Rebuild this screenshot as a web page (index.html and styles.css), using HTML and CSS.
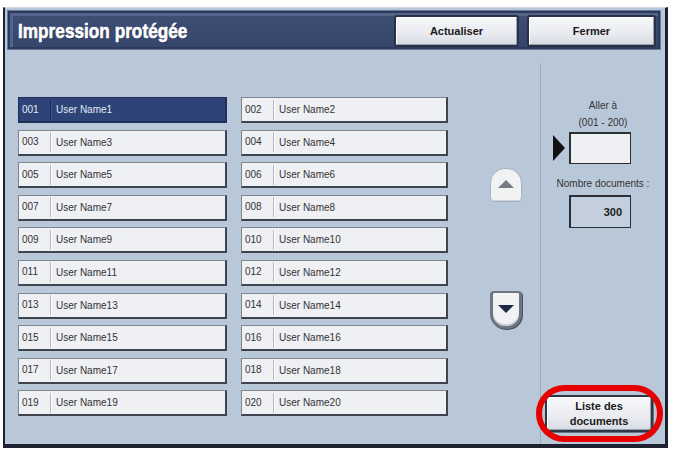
FILE: index.html
```html
<!DOCTYPE html>
<html lang="fr">
<head>
<meta charset="utf-8">
<title>Impression protégée</title>
<link rel="stylesheet" href="styles.css">
</head>
<body>
<div class="screen">
  <div class="header">
    <div class="title">Impression protégée</div>
    <div class="hbtns">
      <div class="hbtn w1">Actualiser</div>
      <div class="hbtn w2">Fermer</div>
    </div>
  </div>
  <div class="main">
    <div class="left">
      <div class="grid">
        <div class="row sel"><span class="num">001</span><span class="name">User Name1</span></div>
        <div class="row"><span class="num">002</span><span class="name">User Name2</span></div>
        <div class="row"><span class="num">003</span><span class="name">User Name3</span></div>
        <div class="row"><span class="num">004</span><span class="name">User Name4</span></div>
        <div class="row"><span class="num">005</span><span class="name">User Name5</span></div>
        <div class="row"><span class="num">006</span><span class="name">User Name6</span></div>
        <div class="row"><span class="num">007</span><span class="name">User Name7</span></div>
        <div class="row"><span class="num">008</span><span class="name">User Name8</span></div>
        <div class="row"><span class="num">009</span><span class="name">User Name9</span></div>
        <div class="row"><span class="num">010</span><span class="name">User Name10</span></div>
        <div class="row"><span class="num">011</span><span class="name">User Name11</span></div>
        <div class="row"><span class="num">012</span><span class="name">User Name12</span></div>
        <div class="row"><span class="num">013</span><span class="name">User Name13</span></div>
        <div class="row"><span class="num">014</span><span class="name">User Name14</span></div>
        <div class="row"><span class="num">015</span><span class="name">User Name15</span></div>
        <div class="row"><span class="num">016</span><span class="name">User Name16</span></div>
        <div class="row"><span class="num">017</span><span class="name">User Name17</span></div>
        <div class="row"><span class="num">018</span><span class="name">User Name18</span></div>
        <div class="row"><span class="num">019</span><span class="name">User Name19</span></div>
        <div class="row"><span class="num">020</span><span class="name">User Name20</span></div>
      </div>
      <div class="scroller">
        <div class="sbtn up"><span class="tri-up"></span></div>
        <div class="sbtn down"><span class="tri-down"></span></div>
      </div>
    </div>
    <div class="side">
      <div class="label">Aller à<br>(001 - 200)</div>
      <div class="goto">
        <span class="pointer"></span>
        <div class="box"></div>
      </div>
      <div class="label2">Nombre documents :</div>
      <div class="box count">300</div>
      <div class="spacer"></div>
      <div class="liste">Liste des<br>documents</div>
    </div>
  </div>
</div>
</body>
</html>
```

FILE: styles.css
```css
html, body {
  margin: 0;
  padding: 0;
  background: #ffffff;
}

body {
  font-family: "Liberation Sans", Arial, sans-serif;
}

.screen {
  box-sizing: border-box;
  margin: 7px 0 0 3px;
  width: 665px;
  height: 441px;
  background: #b9c8d9;
  border-top: 1px solid #cfd9e4;
  border-left: 2px solid #1d2230;
  border-right: 3px solid #1d2230;
  border-bottom: 4px solid #1d2230;
  display: flex;
  flex-direction: column;
}

.header {
  box-sizing: border-box;
  margin: 2px 4px 0 2px;
  height: 40px;
  background: linear-gradient(#3f4f75, #34446a);
  border: 1px solid #6a7899;
  box-shadow: inset 0 0 0 2px #2c3a5c, inset 3px 3px 0 2px #55648a;
  display: flex;
  justify-content: space-between;
  align-items: flex-start;
  padding: 4px 4px 0 10px;
}

.title {
  font-family: "Liberation Sans", Arial, sans-serif;
  font-weight: bold;
  font-size: 21px;
  line-height: 32px;
  color: #ffffff;
  -webkit-text-stroke: 0.6px #ffffff;
  text-shadow: 1px 1px 0 #1e2944;
  white-space: nowrap;
  transform: scaleX(0.82);
  transform-origin: left center;
}

.hbtns {
  display: flex;
  gap: 8px;
}

.hbtn {
  box-sizing: border-box;
  height: 32px;
  border: 2px solid #283145;
  border-radius: 3px;
  background: linear-gradient(#f7f8fa, #e8eaef 60%, #d6dae2);
  box-shadow: inset 1px 1px 0 #ffffff, inset -1px -1px 0 #9aa2b2;
  font-weight: bold;
  font-size: 11px;
  color: #1a1a1a;
  display: flex;
  align-items: center;
  justify-content: center;
}

.w1 { width: 125px; }
.w2 { width: 129px; }

.main {
  flex: 1;
  display: flex;
  padding-top: 13px;
}

.left {
  flex: 1;
  display: flex;
  padding: 34px 0 0 13px;
}

.grid {
  display: grid;
  grid-template-columns: 209px 207px;
  grid-auto-rows: 26px;
  column-gap: 14px;
  row-gap: 6.6px;
  align-content: start;
}

.row {
  box-sizing: border-box;
  display: flex;
  align-items: center;
  background: #eff0f4;
  border: 1px solid #80868f;
  border-right: 2px solid #3f444e;
  border-bottom: 2px solid #3f444e;
  font-size: 10px;
  color: #333333;
}

.num {
  box-sizing: border-box;
  width: 32px;
  padding-left: 3px;
  height: 20px;
  line-height: 20px;
  border-right: 1px solid #b4b8c0;
  box-shadow: 1px 0 0 #ffffff;
}

.name {
  padding-left: 5px;
}

.row.sel {
  background: #2e4478;
  border-color: #1f2f5a;
  color: #e4e8f2;
}

.row.sel .num {
  border-right-color: #1a2850;
  box-shadow: 1px 0 0 #3d5590;
}

.scroller {
  display: flex;
  flex-direction: column;
  padding-left: 42px;
}

.sbtn {
  box-sizing: border-box;
  width: 32px;
  display: flex;
  align-items: center;
  justify-content: center;
  background: #f1f2f4;
}

.sbtn.up {
  margin-top: 71px;
  height: 34px;
  border: 1px solid #a9b0bc;
  border-radius: 15px 15px 4px 4px;
  box-shadow: inset 0 -1px 0 #d0d4da;
}

.sbtn.down {
  margin-top: 89px;
  height: 38px;
  border: 3px solid #6e7482;
  border-top-width: 2px;
  border-radius: 4px 4px 15px 15px;
  box-shadow: inset 0 -2px 0 #c8ccd4, 1px 1px 0 #4d5260;
}

.tri-up {
  width: 0;
  height: 0;
  border-left: 8px solid transparent;
  border-right: 8px solid transparent;
  border-bottom: 8px solid #777b83;
  margin-top: -2px;
}

.tri-down {
  width: 0;
  height: 0;
  border-left: 8px solid transparent;
  border-right: 8px solid transparent;
  border-top: 8px solid #1e2947;
  margin-top: -2px;
}

.side {
  box-sizing: border-box;
  width: 125px;
  border-left: 1px solid #9dacbf;
  display: flex;
  flex-direction: column;
  padding: 34px 0 12px 0;
  font-size: 10px;
  color: #333333;
}

.label {
  text-align: center;
  line-height: 17px;
}

.goto {
  display: flex;
  align-items: center;
  margin-top: 1px;
  padding-left: 12px;
  gap: 4px;
}

.pointer {
  width: 0;
  height: 0;
  border-top: 13px solid transparent;
  border-bottom: 13px solid transparent;
  border-left: 12px solid #111111;
}

.box {
  box-sizing: border-box;
  width: 62px;
  height: 32px;
  background: #eef0f3;
  border: 2px solid #2b2f38;
  border-right-width: 1px;
  border-bottom-width: 1px;
}

.label2 {
  text-align: center;
  line-height: 16px;
  margin-top: 12px;
}

.count {
  margin: 3px 0 0 28px;
  height: 33px;
  background: #c4cfdd;
  font-weight: bold;
  font-size: 11px;
  color: #1a1a1a;
  display: flex;
  align-items: center;
  justify-content: flex-end;
  padding-right: 8px;
}

.spacer {
  flex: 1;
}

.liste {
  position: relative;
  box-sizing: border-box;
  margin-left: 4px;
  width: 108px;
  height: 37px;
  border: 2px solid #2f3644;
  border-radius: 4px;
  background: linear-gradient(#f7f8fa, #e9ebf0 60%, #d8dce4);
  box-shadow: inset 1px 1px 0 #ffffff, inset -1px -1px 0 #9aa2b2, 1px 1px 0 #6b7385;
  font-weight: bold;
  font-size: 11px;
  line-height: 15px;
  color: #1a1a1a;
  text-align: center;
  display: flex;
  align-items: center;
  justify-content: center;
}

.liste::after {
  content: "";
  position: absolute;
  left: -11px;
  right: -12px;
  top: -12px;
  bottom: -12px;
  border: 6px solid #e60000;
  border-radius: 30px;
}
```
